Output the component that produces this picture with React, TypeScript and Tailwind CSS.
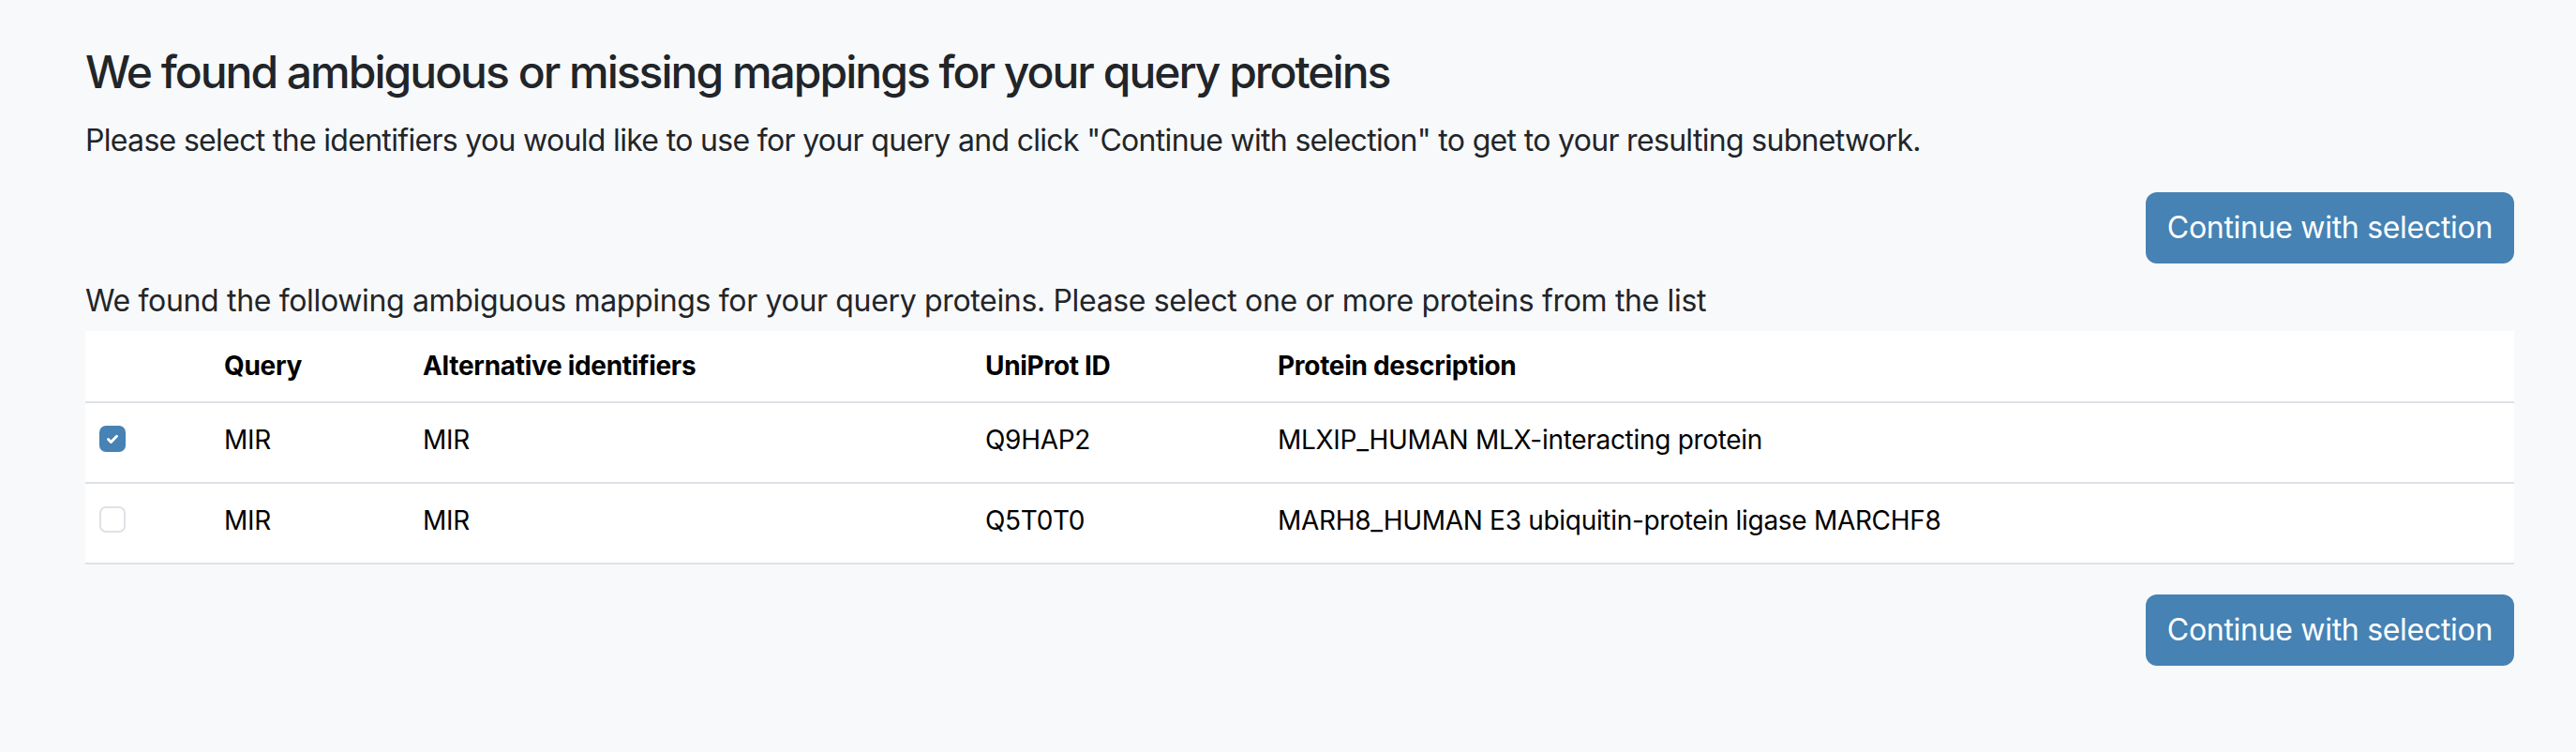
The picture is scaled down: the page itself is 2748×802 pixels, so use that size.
import React from 'react'

const rows = [
  { checked: true, query: 'MIR', alt: 'MIR', uniprot: 'Q9HAP2', desc: 'MLXIP_HUMAN MLX-interacting protein' },
  { checked: false, query: 'MIR', alt: 'MIR', uniprot: 'Q5T0T0', desc: 'MARH8_HUMAN E3 ubiquitin-protein ligase MARCHF8' },
]

function Checkbox({ checked }: { checked: boolean }) {
  if (checked) {
    return (
      <span className="flex h-[28px] w-[28px] items-center justify-center rounded-[7px] bg-[#4682b4]">
        <svg viewBox="0 0 16 16" className="h-[18px] w-[18px]" fill="none">
          <path d="M4 8.5l2.6 2.6L12 5.6" stroke="#fff" strokeWidth="2.6" strokeLinecap="round" strokeLinejoin="round" />
        </svg>
      </span>
    )
  }
  return <span className="block h-[28px] w-[28px] rounded-[7px] border-2 border-[#dee2e6] bg-white" />
}

function ContinueButton() {
  return (
    <button className="h-[76px] rounded-[12px] bg-[#4682b4] px-[23px] text-[32px] tracking-[-0.3px] text-white">
      Continue with selection
    </button>
  )
}

export default function App() {
  return (
    <div className="min-h-screen bg-[#f8f9fa] font-['Inter','Noto_Sans',sans-serif] text-[#212529]">
      <div className="pl-[91px] pr-[66px] pt-[48px]">
        <h2 className="text-[48px] font-medium leading-[1.2] tracking-[-2px]">
          We found ambiguous or missing mappings for your query proteins
        </h2>
        <p className="mt-[20px] text-[32px] leading-[1.5] tracking-[-0.68px]">
          Please select the identifiers you would like to use for your query and click "Continue with selection" to get to your resulting subnetwork.
        </p>
        <div className="mt-[31px] flex justify-end">
          <ContinueButton />
        </div>
        <p className="mt-[16px] text-[32px] leading-[1.5] tracking-[-0.34px]">
          We found the following ambiguous mappings for your query proteins. Please select one or more proteins from the list
        </p>
        <table className="mt-[8px] w-full border-collapse bg-white text-left text-[28px] tracking-[-0.3px] text-black">
          <thead>
            <tr className="h-[76px] border-b-[2px] border-[#dee2e6]">
              <th className="w-[132px]" />
              <th className="w-[212px] px-[16px] font-bold">Query</th>
              <th className="w-[600px] px-[16px] font-bold">Alternative identifiers</th>
              <th className="w-[312px] px-[16px] font-bold">UniProt ID</th>
              <th className="px-[16px] font-bold">Protein description</th>
            </tr>
          </thead>
          <tbody>
            {rows.map((r) => (
              <tr key={r.uniprot} className="h-[86px] border-b-[2px] border-[#dee2e6]">
                <td className="pb-[8px] pl-[15px]">
                  <Checkbox checked={r.checked} />
                </td>
                <td className="px-[16px] pb-[6px]">{r.query}</td>
                <td className="px-[16px] pb-[6px]">{r.alt}</td>
                <td className="px-[16px] pb-[6px]">{r.uniprot}</td>
                <td className="px-[16px] pb-[6px]">{r.desc}</td>
              </tr>
            ))}
          </tbody>
        </table>
        <div className="mt-[32px] flex justify-end">
          <ContinueButton />
        </div>
      </div>
    </div>
  )
}
